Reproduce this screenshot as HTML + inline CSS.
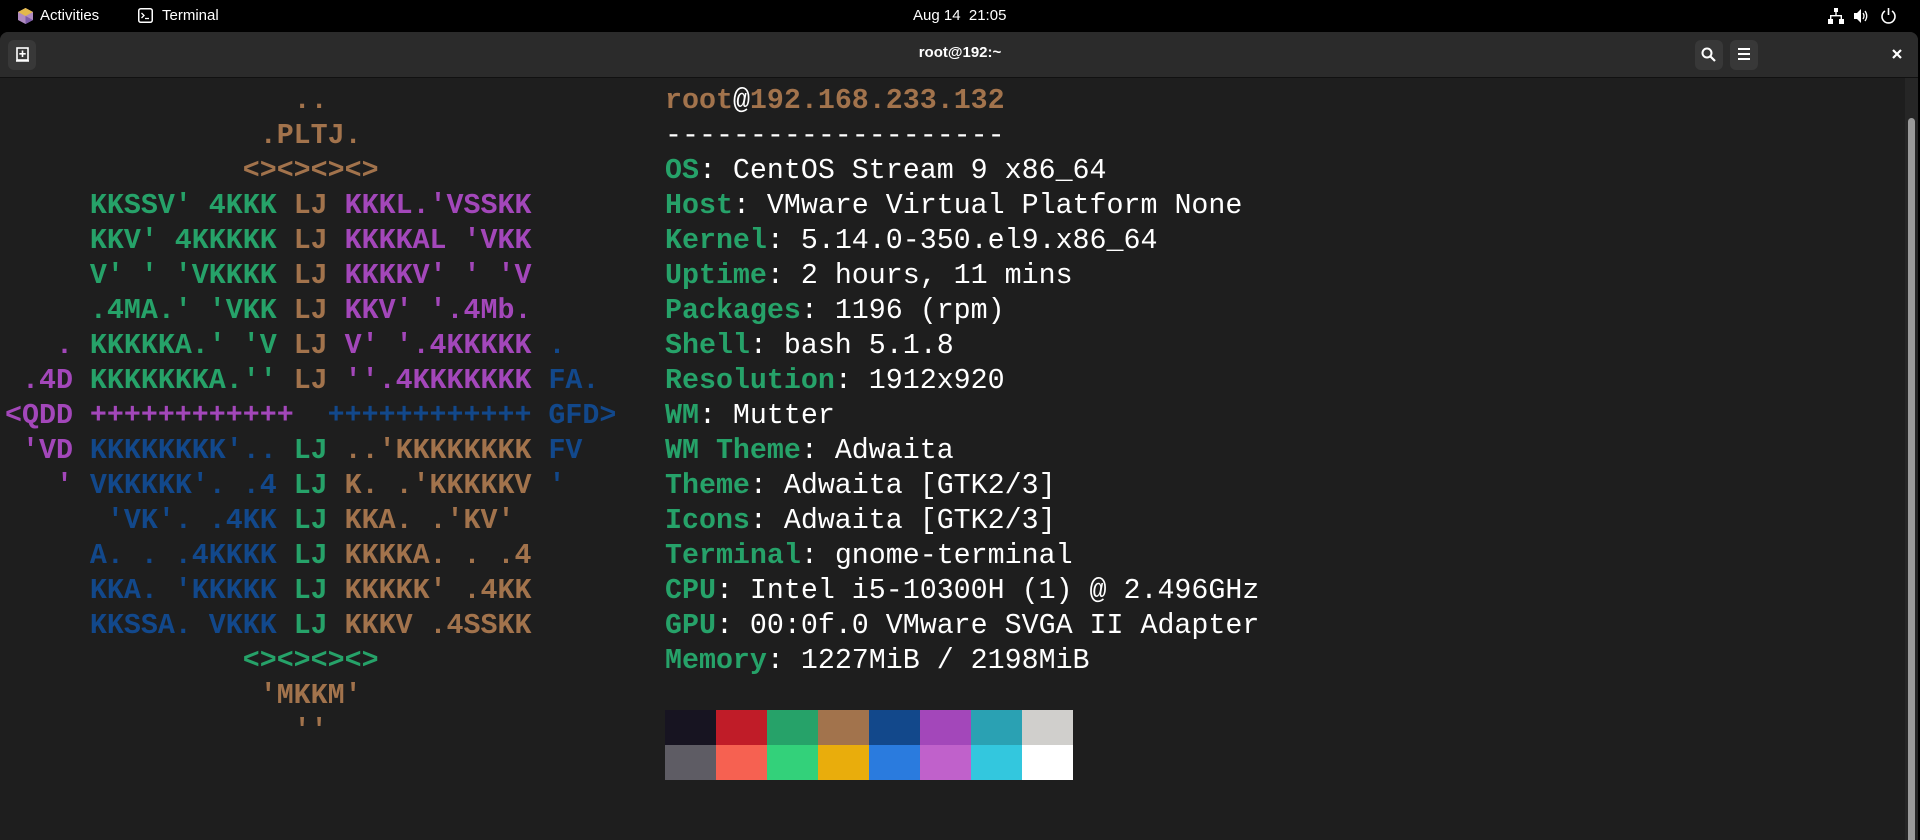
<!DOCTYPE html>
<html><head><meta charset="utf-8"><style>
html,body{margin:0;padding:0;width:1920px;height:840px;overflow:hidden;background:#000;font-family:"Liberation Sans",sans-serif;}
#top{position:absolute;left:0;top:0;width:1920px;height:32px;background:#000;color:#fff;font-size:15px;}
#win{position:absolute;left:0;top:32px;width:1918px;height:808px;background:#1e1e1e;border-radius:8px 8px 0 0;overflow:hidden;}
#hdr{position:absolute;left:0;top:0;width:100%;height:45px;background:#2b2b2b;border-bottom:1px solid #111;}
.btn{position:absolute;top:8px;width:32px;height:30px;background:#383838;border-radius:6px;}
pre{margin:0;position:absolute;font-family:"Liberation Mono",monospace;font-size:28.3px;line-height:35px;color:#fff;}
.g{color:#26a269}.b{color:#a2734c}.p{color:#a347ba}.u{color:#12488b}
#art{left:5px;top:84px;font-weight:bold;}
#info{left:665px;top:84px;}
#info b{color:#26a269}
.sw{position:absolute;width:51px;height:35px;}
</style></head><body>
<div id="top">
 <svg style="position:absolute;left:18px;top:8px" width="15" height="16"><polygon points="7.5,0 15,4 15,12 7.5,16 0,12 0,4" fill="#b08bc0"/><polygon points="7.5,0 15,4 7.5,8 0,4" fill="#e3b94b"/><polygon points="7.5,8 15,12 7.5,16" fill="#7d5ca8"/></svg>
 <span style="position:absolute;left:40px;top:7px">Activities</span>
 <svg style="position:absolute;left:138px;top:8px" width="15" height="15"><rect x="0.75" y="0.75" width="13.5" height="13.5" rx="2" fill="none" stroke="#fff" stroke-width="1.5"/><path d="M3.5 5 L6 7.5 L3.5 10 M7 10.5 H11" stroke="#fff" stroke-width="1.3" fill="none"/></svg>
 <span style="position:absolute;left:162px;top:7px">Terminal</span>
 <span style="position:absolute;left:913px;top:7px">Aug 14&nbsp; 21:05</span>
 <svg style="position:absolute;left:1828px;top:8px" width="16" height="16" fill="#fff"><rect x="6" y="0" width="4" height="4"/><rect x="7.3" y="4" width="1.4" height="4"/><rect x="2" y="7" width="12" height="1.4"/><rect x="2" y="7" width="1.4" height="4"/><rect x="12.6" y="7" width="1.4" height="4"/><rect x="0" y="11" width="5" height="5"/><rect x="11" y="11" width="5" height="5"/></svg>
 <svg style="position:absolute;left:1853px;top:8px" width="16" height="16"><path d="M1 5 H4 L8 1 V15 L4 11 H1Z" fill="#fff"/><path d="M10 5 Q12 8 10 11 M12 3 Q15.5 8 12 13" stroke="#fff" stroke-width="1.3" fill="none"/></svg>
 <svg style="position:absolute;left:1880px;top:7px" width="17" height="17"><path d="M5 4 A6.5 6.5 0 1 0 12 4" stroke="#fff" stroke-width="1.6" fill="none"/><path d="M8.5 1 V8" stroke="#fff" stroke-width="1.6"/></svg>
</div>
<div id="win">
 <div id="hdr">
  <div class="btn" style="left:8px;width:28px"></div>
  <svg style="position:absolute;left:16px;top:15px" width="13" height="15"><rect x="1" y="1" width="11" height="12" fill="none" stroke="#fff" stroke-width="1.6"/><path d="M6.5 3.5 V10 M3.3 6.8 H9.7" stroke="#fff" stroke-width="1.6"/><path d="M0 14 H13" stroke="#fff" stroke-width="1.5"/></svg>
  <div style="position:absolute;left:0;width:1920px;top:12px;text-align:center;color:#fff;font-size:15px;font-weight:bold">root@192:~</div>
  <div class="btn" style="left:1695px;width:28px"></div>
  <svg style="position:absolute;left:1700px;top:14px" width="18" height="18"><circle cx="7" cy="7" r="4.5" stroke="#fff" stroke-width="2" fill="none"/><path d="M10 10 L15 15" stroke="#fff" stroke-width="2.2"/></svg>
  <div class="btn" style="left:1730px;width:28px"></div>
  <svg style="position:absolute;left:1738px;top:15px" width="12" height="14" fill="#fff"><rect y="1" width="12" height="2"/><rect y="6" width="12" height="2"/><rect y="11" width="12" height="2"/></svg>
  <svg style="position:absolute;left:1892px;top:17px" width="10" height="10"><path d="M1 1 L9 9 M9 1 L1 9" stroke="#fff" stroke-width="2.2"/></svg>
 </div>
 <div style="position:absolute;left:1905px;top:46px;width:13px;height:770px;background:#262626"></div>
 <div style="position:absolute;left:1908px;top:86px;width:7px;height:730px;background:#9a9a9a;border-radius:4px"></div>
</div>
<pre id="art"><span class="b">                 ..
               .PLTJ.
              &lt;&gt;&lt;&gt;&lt;&gt;&lt;&gt;</span>
     <span class="g">KKSSV' 4KKK</span> <span class="b">LJ</span> <span class="p">KKKL.'VSSKK</span>
     <span class="g">KKV' 4KKKKK</span> <span class="b">LJ</span> <span class="p">KKKKAL 'VKK</span>
     <span class="g">V' ' 'VKKKK</span> <span class="b">LJ</span> <span class="p">KKKKV' ' 'V</span>
     <span class="g">.4MA.' 'VKK</span> <span class="b">LJ</span> <span class="p">KKV' '.4Mb.</span>
   <span class="p">.</span> <span class="g">KKKKKA.' 'V</span> <span class="b">LJ</span> <span class="p">V' '.4KKKKK</span> <span class="u">.</span>
 <span class="p">.4D</span> <span class="g">KKKKKKKA.''</span> <span class="b">LJ</span> <span class="p">''.4KKKKKKK</span> <span class="u">FA.</span>
<span class="p">&lt;QDD ++++++++++++</span>  <span class="u">++++++++++++ GFD&gt;</span>
 <span class="p">'VD</span> <span class="u">KKKKKKKK'..</span> <span class="g">LJ</span> <span class="b">..'KKKKKKKK</span> <span class="u">FV</span>
   <span class="p">'</span> <span class="u">VKKKKK'. .4</span> <span class="g">LJ</span> <span class="b">K. .'KKKKKV</span> <span class="u">'</span>
      <span class="u">'VK'. .4KK</span> <span class="g">LJ</span> <span class="b">KKA. .'KV'</span>
     <span class="u">A. . .4KKKK</span> <span class="g">LJ</span> <span class="b">KKKKA. . .4</span>
     <span class="u">KKA. 'KKKKK</span> <span class="g">LJ</span> <span class="b">KKKKK' .4KK</span>
     <span class="u">KKSSA. VKKK</span> <span class="g">LJ</span> <span class="b">KKKV .4SSKK</span>
<span class="g">              &lt;&gt;&lt;&gt;&lt;&gt;&lt;&gt;</span>
<span class="b">               'MKKM'
                 ''</span></pre>
<pre id="info"><span class="b" style="font-weight:bold">root</span>@<span class="b" style="font-weight:bold">192.168.233.132</span>
--------------------
<b>OS</b>: CentOS Stream 9 x86_64
<b>Host</b>: VMware Virtual Platform None
<b>Kernel</b>: 5.14.0-350.el9.x86_64
<b>Uptime</b>: 2 hours, 11 mins
<b>Packages</b>: 1196 (rpm)
<b>Shell</b>: bash 5.1.8
<b>Resolution</b>: 1912x920
<b>WM</b>: Mutter
<b>WM Theme</b>: Adwaita
<b>Theme</b>: Adwaita [GTK2/3]
<b>Icons</b>: Adwaita [GTK2/3]
<b>Terminal</b>: gnome-terminal
<b>CPU</b>: Intel i5-10300H (1) @ 2.496GHz
<b>GPU</b>: 00:0f.0 VMware SVGA II Adapter
<b>Memory</b>: 1227MiB / 2198MiB</pre>
<div class="sw" style="left:665px;top:710px;background:#171421"></div>
<div class="sw" style="left:716px;top:710px;background:#c01c28"></div>
<div class="sw" style="left:767px;top:710px;background:#26a269"></div>
<div class="sw" style="left:818px;top:710px;background:#a2734c"></div>
<div class="sw" style="left:869px;top:710px;background:#12488b"></div>
<div class="sw" style="left:920px;top:710px;background:#a347ba"></div>
<div class="sw" style="left:971px;top:710px;background:#2aa1b3"></div>
<div class="sw" style="left:1022px;top:710px;background:#d0cfcc"></div>
<div class="sw" style="left:665px;top:745px;background:#5e5c64"></div>
<div class="sw" style="left:716px;top:745px;background:#f66151"></div>
<div class="sw" style="left:767px;top:745px;background:#33d17a"></div>
<div class="sw" style="left:818px;top:745px;background:#e9ad0c"></div>
<div class="sw" style="left:869px;top:745px;background:#2a7bde"></div>
<div class="sw" style="left:920px;top:745px;background:#c061cb"></div>
<div class="sw" style="left:971px;top:745px;background:#33c7de"></div>
<div class="sw" style="left:1022px;top:745px;background:#ffffff"></div>
</body></html>
